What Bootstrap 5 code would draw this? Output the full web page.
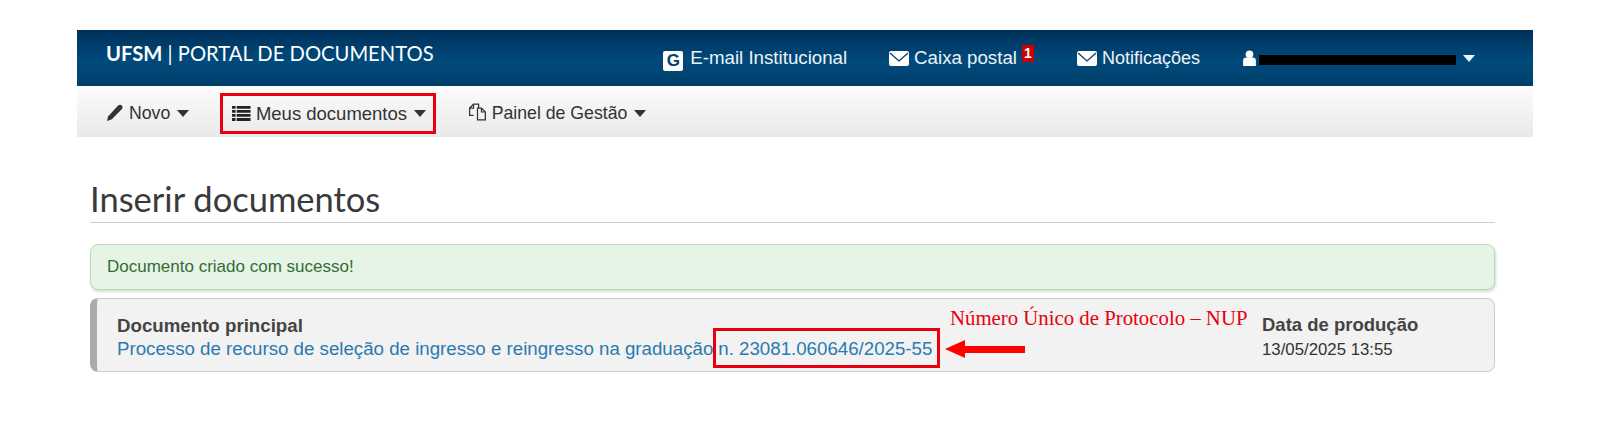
<!DOCTYPE html>
<html lang="pt-BR"><head><meta charset="utf-8"><title>Portal de Documentos</title>
<link href="https://cdn.jsdelivr.net/npm/bootstrap@5.3.0/dist/css/bootstrap.min.css" rel="stylesheet">
<style>
body{background:#fff;font-family:"Liberation Sans",Arial,sans-serif;font-size:16px;color:#333}
.shell{margin:30px 87px 0 77px}
.topbar{height:56px;background:linear-gradient(#00305a,#004a7c 55%,#00406c);color:#fff;padding:0 0 0 29px}
.brand-txt{font-family:Lato,sans-serif;font-size:20.2px;margin-top:-10px;white-space:nowrap}
.topitem{color:#eef3f7;font-size:18.7px;white-space:nowrap;margin-top:1px}
.topitem.tight{font-size:18px}
.topitems{margin-left:auto;padding-right:58px}
.gap-mail{margin-right:42px}
.gap-box{margin-right:43px}
.gap-not{margin-right:43px}
.ic{display:inline-block;vertical-align:-2px;margin-right:5px}
.ic-flush{margin-right:0}
.gbox{display:inline-block;width:20px;height:20px;background:#fff;border-radius:2px;color:#00406c;font-weight:700;font-size:17px;line-height:20px;text-align:center;margin-right:7px;vertical-align:-2px}
.pill-num{display:inline-block;background:#c00;color:#fff;font-size:14px;font-weight:700;line-height:17px;width:12px;text-align:center;vertical-align:6px;margin-left:5px}
.hidden-name{display:inline-block;width:197px;height:10px;background:#000;vertical-align:-1px;margin-left:3px}
.caret-dn{display:inline-block;border-left:6px solid transparent;border-right:6px solid transparent;border-top:7px solid currentColor;vertical-align:2px;margin-left:7px}
.subbar{height:51px;background:linear-gradient(#fcfcfc,#e9e9e9);padding:3px 0 0 30px;color:#333;font-size:17.7px}
.subitem{white-space:nowrap;padding-top:1px}
.subitem.boxed{border:3px solid #e8000f;height:41px;padding:1px 6.6px 0 9px;margin:0 32px 0 31px;display:flex;align-items:center;font-size:18.5px}
.content{margin:0 38px 0 13px}
.pg-title{font-family:Lato,sans-serif;font-weight:400;font-size:34.5px;color:#3a3a3a;line-height:38px;margin:43px 0 0;padding-bottom:4px;border-bottom:1px solid #ccc}
.ok-box{margin-top:21px;height:46px;background:#e6f4e6;border:1px solid #b2dcb2;border-radius:8px;color:#356b35;padding:0 16px;box-shadow:1px 2px 3px rgba(0,0,0,.15);display:flex;align-items:center;font-size:17px}
.doc-box{margin-top:8px;height:74px;background:#f2f2f2;border:1px solid #ccc;border-left:7px solid #aaa;border-radius:8px;padding:0 0 0 20px;position:relative;font-size:18.7px}
.doc-main{line-height:23px;padding-top:15px;white-space:nowrap}
.doc-link{color:#2a7ab0;text-decoration:none}
.nup-box{display:inline-block;border:3px solid #e8000f;padding:8px 5px 6px 2px;margin-top:-11px;line-height:20px}
.doc-date{width:232px;padding-top:14px;line-height:24px;font-size:18.5px}
.date-val{font-size:16.8px}
.nup-label{font-family:"Liberation Serif",serif;color:#e8000f;font-size:20.8px;white-space:nowrap;position:absolute;left:853px;top:3px}
.nup-arrow{position:absolute;left:848px;top:40px}
b{color:#444}
</style></head><body>
<div class="shell">
<header class="topbar d-flex align-items-center">
 <div class="brand-txt"><strong>UFSM</strong> | PORTAL DE DOCUMENTOS</div>
 <div class="topitems d-flex align-items-center">
  <span class="topitem gap-mail"><span class="gbox">G</span>E-mail Institucional</span>
  <span class="topitem gap-box"><svg class="ic" width="20" height="15" viewBox="0 0 20 15"><rect width="20" height="15" rx="2" fill="#fff"/><path d="M1 2l9 8 9-8" fill="none" stroke="#00406c" stroke-width="1.3"/></svg>Caixa postal<span class="pill-num">1</span></span>
  <span class="topitem tight gap-not"><svg class="ic" width="20" height="15" viewBox="0 0 20 15"><rect width="20" height="15" rx="2" fill="#fff"/><path d="M1 2l9 8 9-8" fill="none" stroke="#00406c" stroke-width="1.3"/></svg>Notificações</span>
  <span class="topitem"><svg class="ic ic-flush" width="13" height="16" viewBox="0 0 12 15"><circle cx="6" cy="4" r="3.6" fill="#fff"/><path d="M0 15V10q0-3 3-3h6q3 0 3 3v5z" fill="#fff"/></svg><span class="hidden-name"></span><span class="caret-dn"></span></span>
 </div>
</header>
<nav class="subbar d-flex align-items-center">
 <span class="subitem"><svg class="ic" width="17" height="17" viewBox="0 0 14 14"><path d="M0 14l1-4 8-8.5q1.5-1.5 3-.5t.5 3L4 12.5z" fill="#333"/></svg>Novo<span class="caret-dn"></span></span>
 <span class="subitem boxed"><svg class="ic" width="18.6" height="15" viewBox="0 0 16 13"><path d="M0 0h3v2.4H0zM4 0h12v2.4H4zM0 3.5h3v2.4H0zM4 3.5h12v2.4H4zM0 7h3v2.4H0zM4 7h12v2.4H4zM0 10.5h3v2.4H0zM4 10.5h12v2.4H4z" fill="#222"/></svg>Meus documentos<span class="caret-dn"></span></span>
 <span class="subitem"><svg class="ic" width="19" height="18" viewBox="0 0 16 16"><path d="M4.5 11H1V4.5L4.5 1H9v3.5M4.5 1v3.5H1M8 4.5h3.5L15 8v7H8zM11.5 4.5V8H15" fill="none" stroke="#333" stroke-width="1.1"/></svg>Painel de Gestão<span class="caret-dn"></span></span>
</nav>
<main class="content">
 <h1 class="pg-title">Inserir documentos</h1>
 <div class="ok-box">Documento criado com sucesso!</div>
 <div class="doc-box d-flex">
  <div class="doc-main flex-grow-1"><b>Documento principal</b><br><a class="doc-link" href="#">Processo de recurso de seleção de ingresso e reingresso na graduação<span class="nup-box">n. 23081.060646/2025-55</span></a></div>
  <div class="doc-date"><b>Data de produção</b><br><span class="date-val">13/05/2025 13:55</span></div>
  <span class="nup-label">Número Único de Protocolo – NUP</span>
  <svg class="nup-arrow" width="80" height="20" viewBox="0 0 80 20"><path d="M0 10l20-9v6h60v7H20v5z" fill="#f00"/></svg>
 </div>
</main>
</div>
</body></html>
